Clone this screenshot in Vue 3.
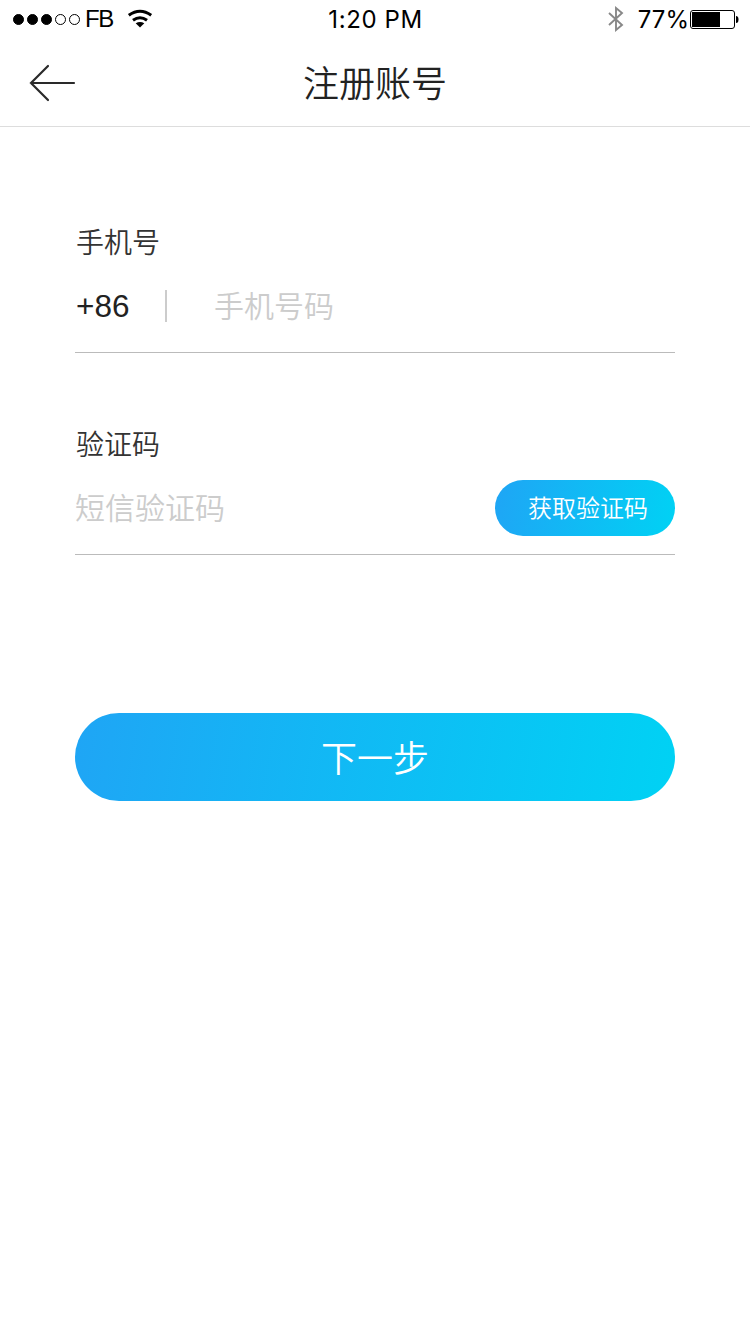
<script setup>
import { ref } from 'vue'

const phone = ref('')
const code = ref('')
const signal = 3
</script>

<template>
  <div class="page">
    <div class="status">
      <div class="status-left">
        <svg class="dots" width="68" height="12" viewBox="0 0 68 12">
          <circle v-for="n in 5" :key="n" :cx="6.5 + (n - 1) * 14" cy="6.500" r="5" stroke="#000" :fill="n <= signal ? '#000' : 'none'" />
        </svg>
        <span class="carrier">FB</span>
        <svg class="wifi" width="26" height="20" viewBox="0 0 26 20">
          <path d="M1.800 6.300q11.200-8.200 22.400 0M6 11.300q7-5.200 14 0" fill="none" stroke="#000" stroke-width="3" />
          <path d="M13 18.500l-4.300-4.200q4.300-2.800 8.600 0z" />
        </svg>
      </div>
      <span class="time">1:20 PM</span>
      <div class="status-right">
        <svg width="16" height="26" viewBox="0 0 16 26">
          <path d="M1 7l13 12-6 5V2l6 5L1 19" fill="none" stroke="#888" stroke-width="1.900" />
        </svg>
        <span class="percent">77%</span>
        <svg width="50" height="20" viewBox="0 0 50 20">
          <rect x="1.500" y="1.500" width="44" height="18" rx="2.500" fill="none" stroke="#000" />
          <rect x="3" y="3" width="28" height="15" />
          <path d="M47 7q2.500 0 2.500 3.500t-2.500 3.500z" />
        </svg>
      </div>
    </div>
    <header class="nav">
      <svg class="back" width="48" height="38" viewBox="0 0 48 38">
        <path d="M20 2L3 19l17 17M3 19h43" fill="none" stroke="#2a2a2a" stroke-width="2.200" stroke-linecap="round" />
      </svg>
      <h1>注册账号</h1>
    </header>
    <main class="form">
      <div class="field">
        <label for="phone">手机号</label>
        <div class="row">
          <span class="prefix">+86</span>
          <input id="phone" v-model="phone" type="tel" placeholder="手机号码" />
        </div>
      </div>
      <div class="field">
        <label for="code">验证码</label>
        <div class="row">
          <input id="code" v-model="code" type="text" placeholder="短信验证码" />
          <button class="get-code">获取验证码</button>
        </div>
      </div>
      <button class="next">下一步</button>
    </main>
  </div>
</template>

<style>
body {
  background: #fff;
}
</style>

<style scoped>
.page {
  width: 750px;
  height: 1334px;
  font-family: Inter, "Noto Sans CJK SC", sans-serif;
  color: #222;
  background: #fff;
}
.status {
  display: grid;
  grid-template-columns: 1fr auto 1fr;
  align-items: center;
  height: 38px;
  padding: 0 11px 0 12px;
  font-size: 24px;
  color: #000;
}
.status-left,
.status-right {
  display: flex;
  align-items: center;
}
.status-right {
  justify-content: flex-end;
}
.carrier {
  width: 42px;
  margin-left: 5px;
  font-family: "Liberation Sans", sans-serif;
  letter-spacing: -1.5px;
}
.time {
  letter-spacing: 0.6px;
}
.percent {
  margin-left: 14px;
}
.nav {
  display: grid;
  grid-template-columns: 1fr auto 1fr;
  align-items: center;
  box-sizing: border-box;
  height: 89px;
  padding: 2px 28px 0;
  border-bottom: 1px solid #ddd;
}
h1 {
  margin: 0;
  padding-top: 2px;
  font-size: 36px;
  font-weight: 350;
  line-height: 84px;
}
.form {
  padding: 96px 75px 0;
}
.field {
  box-sizing: border-box;
  height: 130px;
  margin-bottom: 72px;
  border-bottom: 1px solid #bbb;
}
label {
  display: block;
  height: 40px;
  padding-left: 1px;
  font-size: 28px;
  font-weight: 350;
  line-height: 40px;
  color: #333;
}
.row {
  display: flex;
  align-items: center;
  height: 86px;
}
.prefix {
  box-sizing: border-box;
  width: 92px;
  padding-left: 1px;
  font-family: "Liberation Sans", sans-serif;
  font-size: 31.5px;
  line-height: 32px;
  border-right: 2px solid #ccc;
  margin-right: 47px;
}
input {
  flex: 1;
  min-width: 0;
  padding: 0;
  border: 0;
  outline: 0;
  background: transparent;
  font-family: inherit;
  font-size: 30px;
  font-weight: 350;
}
input::placeholder {
  color: #ccc;
}
button {
  padding: 0 0 3px;
  border: 0;
  color: #fff;
  font-family: inherit;
  font-weight: 350;
  background: linear-gradient(100deg, #1fa5f5, #00d2f4);
}
.get-code {
  width: 180px;
  height: 56px;
  padding: 0 0 4px 6px;
  border-radius: 28px;
  font-size: 24px;
}
.next {
  display: block;
  width: 100%;
  height: 88px;
  margin-top: 158px;
  border-radius: 44px;
  font-size: 36px;
}
</style>
